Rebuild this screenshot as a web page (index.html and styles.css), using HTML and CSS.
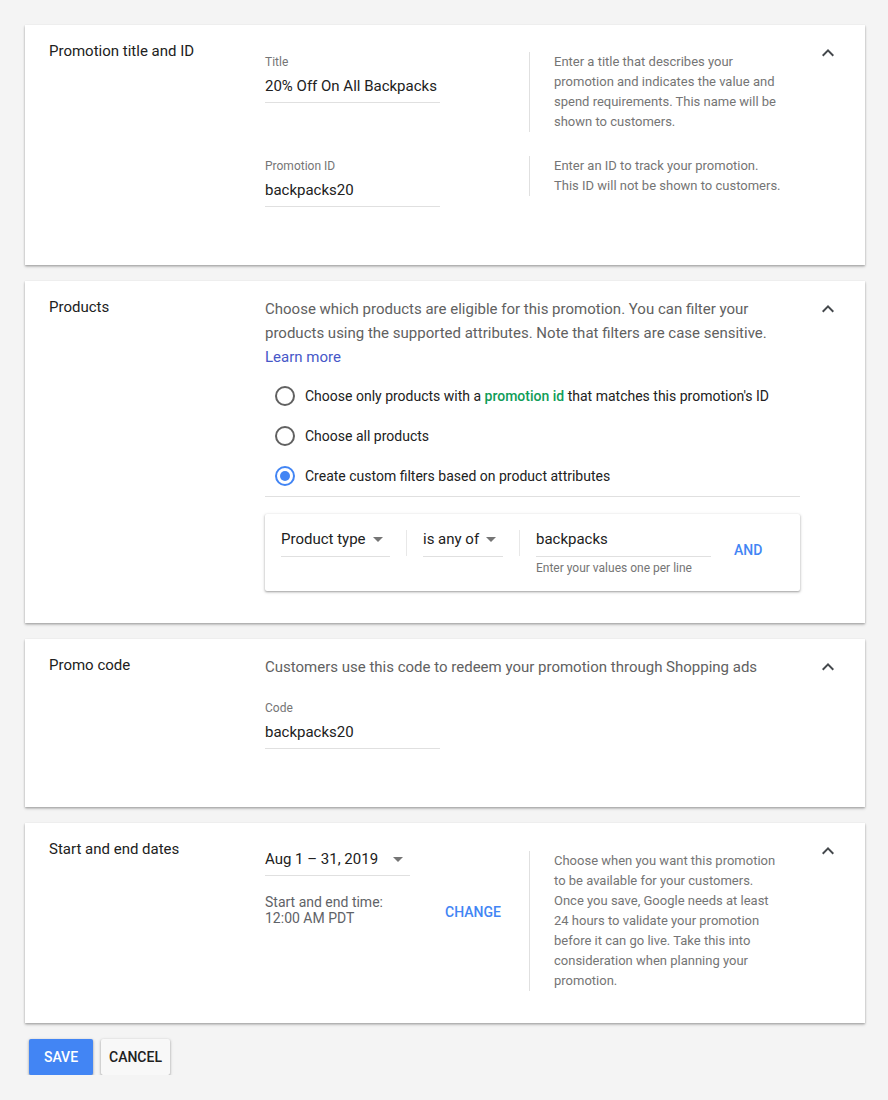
FILE: index.html
```html
<!DOCTYPE html>
<html lang="en">
<head>
<meta charset="utf-8">
<title>Promotion</title>
<link rel="stylesheet" href="styles.css">
</head>
<body>
<div class="page">

  <section class="card">
    <h2 class="card-title">Promotion title and ID</h2>
    <div class="card-body body-fields">
      <div class="row">
        <div class="field-col">
          <div class="field">
            <div class="label">Title</div>
            <div class="value">20% Off On All Backpacks</div>
          </div>
        </div>
        <p class="helper">Enter a title that describes your promotion and indicates the value and spend requirements. This name will be shown to customers.</p>
      </div>
      <div class="row">
        <div class="field-col">
          <div class="field">
            <div class="label">Promotion ID</div>
            <div class="value">backpacks20</div>
          </div>
        </div>
        <p class="helper">Enter an ID to track your promotion. This ID will not be shown to customers.</p>
      </div>
    </div>
    <button class="collapse" aria-label="Collapse"><svg viewBox="0 0 24 24" width="24" height="24"><path d="M12 8l-6 6 1.41 1.41L12 10.83l4.59 4.58L18 14z"/></svg></button>
  </section>

  <section class="card">
    <h2 class="card-title">Products</h2>
    <div class="card-body">
      <p class="desc">Choose which products are eligible for this promotion. You can filter your products using the supported attributes. Note that filters are case sensitive. <a class="link" href="#">Learn more</a></p>
      <div class="radios">
        <div class="radio-row"><span class="radio"></span><span>Choose only products with a <b class="green">promotion id</b> that matches this promotion's ID</span></div>
        <div class="radio-row"><span class="radio"></span><span>Choose all products</span></div>
        <div class="radio-row"><span class="radio checked"></span><span>Create custom filters based on product attributes</span></div>
      </div>
      <div class="filter-box">
        <div class="select sel-type"><span>Product type</span><svg class="arrow" viewBox="0 0 10 5" width="10" height="5"><path d="M0 0h10L5 5z"/></svg></div>
        <div class="vdiv"></div>
        <div class="select sel-op"><span>is any of</span><svg class="arrow" viewBox="0 0 10 5" width="10" height="5"><path d="M0 0h10L5 5z"/></svg></div>
        <div class="vdiv"></div>
        <div class="values">
          <div class="values-input">backpacks</div>
          <div class="hint">Enter your values one per line</div>
        </div>
        <button class="text-btn and-btn">AND</button>
      </div>
    </div>
    <button class="collapse" aria-label="Collapse"><svg viewBox="0 0 24 24" width="24" height="24"><path d="M12 8l-6 6 1.41 1.41L12 10.83l4.59 4.58L18 14z"/></svg></button>
  </section>

  <section class="card">
    <h2 class="card-title">Promo code</h2>
    <div class="card-body">
      <p class="desc">Customers use this code to redeem your promotion through Shopping ads</p>
      <div class="field code-field">
        <div class="label">Code</div>
        <div class="value">backpacks20</div>
      </div>
    </div>
    <button class="collapse" aria-label="Collapse"><svg viewBox="0 0 24 24" width="24" height="24"><path d="M12 8l-6 6 1.41 1.41L12 10.83l4.59 4.58L18 14z"/></svg></button>
  </section>

  <section class="card">
    <h2 class="card-title">Start and end dates</h2>
    <div class="card-body body-dates">
      <div class="row">
        <div class="field-col">
          <div class="select sel-date"><span>Aug 1 – 31, 2019</span><svg class="arrow" viewBox="0 0 10 5" width="10" height="5"><path d="M0 0h10L5 5z"/></svg></div>
          <div class="time-row">
            <div class="time-text">Start and end time:<br>12:00 AM PDT</div>
            <button class="text-btn change-btn">CHANGE</button>
          </div>
        </div>
        <p class="helper helper-dates">Choose when you want this promotion to be available for your customers. Once you save, Google needs at least 24 hours to validate your promotion before it can go live. Take this into consideration when planning your promotion.</p>
      </div>
    </div>
    <button class="collapse" aria-label="Collapse"><svg viewBox="0 0 24 24" width="24" height="24"><path d="M12 8l-6 6 1.41 1.41L12 10.83l4.59 4.58L18 14z"/></svg></button>
  </section>

  <div class="actions">
    <button class="btn btn-primary">SAVE</button>
    <button class="btn btn-secondary">CANCEL</button>
  </div>

</div>
</body>
</html>
```

FILE: styles.css
```css
* { box-sizing: border-box; }

body {
  margin: 0;
  background: #f4f4f4;
  font-family: Roboto, "Noto Sans", "Liberation Sans", Arial, sans-serif;
  color: #212121;
}

.page {
  width: 865px;
  padding: 25px 0 0 25px;
}

.card {
  display: grid;
  grid-template-columns: 216px 535px 1fr;
  align-items: start;
  background: #fff;
  padding: 16px 25px 32px 24px;
  margin-bottom: 16px;
  box-shadow: 0 1px 2px rgba(0, 0, 0, 0.28), 0 2px 3px rgba(0, 0, 0, 0.12);
}

.card-title {
  margin: 0;
  padding-top: 1px;
  font-size: 15px;
  font-weight: 400;
  line-height: 18px;
  color: #212121;
}

.collapse {
  justify-self: end;
  width: 24px;
  height: 24px;
  padding: 0;
  border: 0;
  background: none;
  fill: #44484c;
}

.collapse svg { display: block; }

.body-fields { padding-top: 11px; }
.body-dates { padding-top: 8px; }

.row {
  display: flex;
  align-items: flex-start;
}

.row + .row { margin-top: 24px; }

.field-col { width: 264px; flex: none; }

.field {
  width: 175px;
  margin-bottom: 26px;
}

.label {
  font-size: 12px;
  line-height: 20px;
  color: #757575;
}

.value {
  font-size: 15px;
  line-height: 24px;
  padding: 2px 0 4px;
  border-bottom: 1px solid #e0e0e0;
  color: #212121;
}

.helper {
  margin: 0;
  width: 228px;
  border-left: 1px solid #e0e0e0;
  padding-left: 24px;
  font-size: 13px;
  line-height: 20px;
  color: #757575;
  box-sizing: content-box;
}

.helper-dates { margin-top: 4px; }

.desc {
  margin: 0;
  font-size: 15px;
  line-height: 24px;
  color: #616161;
}

.link {
  color: #4658c8;
  text-decoration: none;
}

.radios {
  margin-top: 7px;
  border-bottom: 1px solid #e0e0e0;
}

.radio-row {
  display: flex;
  align-items: center;
  height: 40px;
  font-size: 14px;
  color: #212121;
}

.radio {
  width: 20px;
  height: 20px;
  margin: 0 10px;
  border: 2px solid #616161;
  border-radius: 50%;
  flex: none;
  display: flex;
  align-items: center;
  justify-content: center;
}

.radio.checked { border-color: #4285f4; }

.radio.checked::after {
  content: "";
  width: 10px;
  height: 10px;
  border-radius: 50%;
  background: #4285f4;
}

.green {
  color: #0f9d58;
  font-weight: 500;
}

.filter-box {
  display: flex;
  align-items: flex-start;
  margin-top: 17px;
  padding: 13px 16px 15px;
  background: #fff;
  box-shadow: 0 1px 2px rgba(0, 0, 0, 0.28), 0 1px 3px 1px rgba(0, 0, 0, 0.1);
  border-radius: 2px;
}

.select {
  display: flex;
  align-items: center;
  justify-content: space-between;
  font-size: 15px;
  line-height: 24px;
  padding-bottom: 4px;
  border-bottom: 1px solid #e0e0e0;
  color: #212121;
}

.filter-box .select { padding-bottom: 5px; }

.arrow { fill: #757575; flex: none; }

.sel-type { width: 109px; padding-right: 7px; }
.sel-op { width: 80px; padding-right: 7px; }
.sel-date { width: 145px; padding-right: 7px; }

.vdiv {
  width: 1px;
  height: 26px;
  margin: 3px 16px 0;
  background: #e8e8e8;
  flex: none;
}

.values { width: 175px; }

.values-input {
  font-size: 15px;
  line-height: 24px;
  padding-bottom: 5px;
  border-bottom: 1px solid #e0e0e0;
  color: #212121;
}

.hint {
  margin-top: 3px;
  font-size: 12px;
  line-height: 16px;
  color: #757575;
}

.text-btn {
  border: 0;
  background: none;
  padding: 0;
  font-family: inherit;
  font-size: 14px;
  font-weight: 500;
  color: #4285f4;
}

.and-btn {
  margin: 13px 0 0 23px;
  line-height: 20px;
}

.change-btn { padding-top: 4px; }

.code-field { margin-top: 19px; }

.time-row {
  display: flex;
  align-items: center;
  margin-top: 18px;
}

.time-text {
  width: 180px;
  font-size: 14px;
  line-height: 16px;
  color: #5f6368;
}

.actions {
  display: flex;
  gap: 8px;
  padding-left: 4px;
}

.btn {
  min-width: 64px;
  height: 36px;
  padding: 0 8px;
  border: 0;
  border-radius: 2px;
  font-family: inherit;
  font-size: 14px;
  font-weight: 500;
  box-shadow: 0 1px 2px rgba(0, 0, 0, 0.3), 0 1px 3px 1px rgba(0, 0, 0, 0.1);
}

.btn-primary {
  background: #4285f4;
  color: #fff;
}

.btn-secondary {
  background: #f8f8f8;
  color: #212121;
}
```
